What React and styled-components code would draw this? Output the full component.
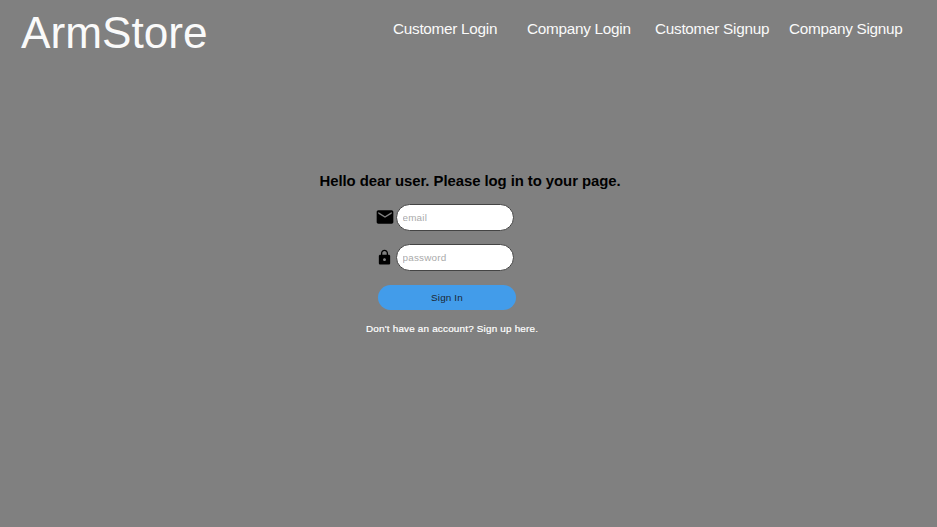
import React from "react";
import styled, { createGlobalStyle } from "styled-components";

const GlobalStyle = createGlobalStyle`
  * { box-sizing: border-box; }
  body {
    margin: 0;
    background: #808080;
    font-family: "Liberation Sans", Arial, sans-serif;
  }
`;

const Page = styled.div`
  min-height: 527px;
  display: flex;
  flex-direction: column;
`;

const Header = styled.header`
  display: flex;
  height: 172px;
  padding-left: 21px;
`;

const Brand = styled.a`
  width: 372px;
  margin-top: 7px;
  font-size: 44.2px;
  line-height: 52px;
  color: #fafafa;
`;

const Nav = styled.nav`
  display: flex;
  margin-top: 19px;
`;

const NavLink = styled.a`
  width: ${(p) => p.$width}px;
  font-size: 15.3px;
  line-height: 20px;
  letter-spacing: -0.27px;
  white-space: nowrap;
  color: #fafafa;
`;

const Title = styled.h1`
  margin: 0 0 13.5px 319.5px;
  font-size: 14.9px;
  line-height: 18px;
  letter-spacing: -0.06px;
  color: #000;
`;

const Form = styled.form`
  display: flex;
  flex-direction: column;
  margin-left: 366px;
`;

const Field = styled.label`
  display: flex;
  align-items: center;
  height: 27px;
  margin-bottom: 13.5px;
  padding-left: 9px;
`;

const Icon = styled.svg`
  width: 20px;
  height: 20px;
  margin-right: 1px;
  fill: #000;
`;

const SmallIcon = styled(Icon)`
  width: 17px;
  height: 17px;
  margin: 0 3px 0 1px;
`;

const Input = styled.input`
  width: 118px;
  height: 27px;
  padding: 0 5.5px;
  border: 1px solid #444;
  border-radius: 14px;
  background: #fff;
  font: 9.9px "Liberation Sans", Arial, sans-serif;
  letter-spacing: 0.2px;
  &::placeholder { color: #aaa; }
`;

const Submit = styled.button`
  width: 138px;
  height: 25px;
  margin: 0 0 13px 12px;
  border: 0;
  border-radius: 13px;
  background: #429cea;
  color: #1a2733;
  font: 9.9px "Liberation Sans", Arial, sans-serif;
  letter-spacing: 0.15px;
`;

const SignupText = styled.a`
  font-size: 9.9px;
  line-height: 12px;
  letter-spacing: 0.2px;
  -webkit-text-stroke: 0.2px #fff;
  color: #fff;
`;

export default function App() {
  return (
    <Page>
      <GlobalStyle />
      <Header>
        <Brand>ArmStore</Brand>
        <Nav>
          <NavLink $width={134}>Customer Login</NavLink>
          <NavLink $width={128}>Company Login</NavLink>
          <NavLink $width={134}>Customer Signup</NavLink>
          <NavLink $width={115}>Company Signup</NavLink>
        </Nav>
      </Header>
      <Title>Hello dear user. Please log in to your page.</Title>
      <Form>
        <Field>
          <Icon viewBox="0 0 24 24">
            <path d="M20 4H4c-1.1 0-2 .9-2 2v12c0 1.1.9 2 2 2h16c1.1 0 2-.9 2-2V6c0-1.1-.9-2-2-2zm0 4-8 5-8-5V6l8 5 8-5v2z" />
          </Icon>
          <Input type="email" placeholder="email" />
        </Field>
        <Field>
          <SmallIcon viewBox="0 0 24 24">
            <path d="M18 8h-1V6c0-2.76-2.24-5-5-5S7 3.24 7 6v2H6c-1.1 0-2 .9-2 2v10c0 1.1.9 2 2 2h12c1.1 0 2-.9 2-2V10c0-1.1-.9-2-2-2zm-6 9c-1.1 0-2-.9-2-2s.9-2 2-2 2 .9 2 2-.9 2-2 2zm3.1-9H8.9V6c0-1.71 1.39-3.1 3.1-3.1s3.1 1.39 3.1 3.1v2z" />
          </SmallIcon>
          <Input type="password" placeholder="password" />
        </Field>
        <Submit type="button">Sign In</Submit>
        <SignupText>Don't have an account? Sign up here.</SignupText>
      </Form>
    </Page>
  );
}
